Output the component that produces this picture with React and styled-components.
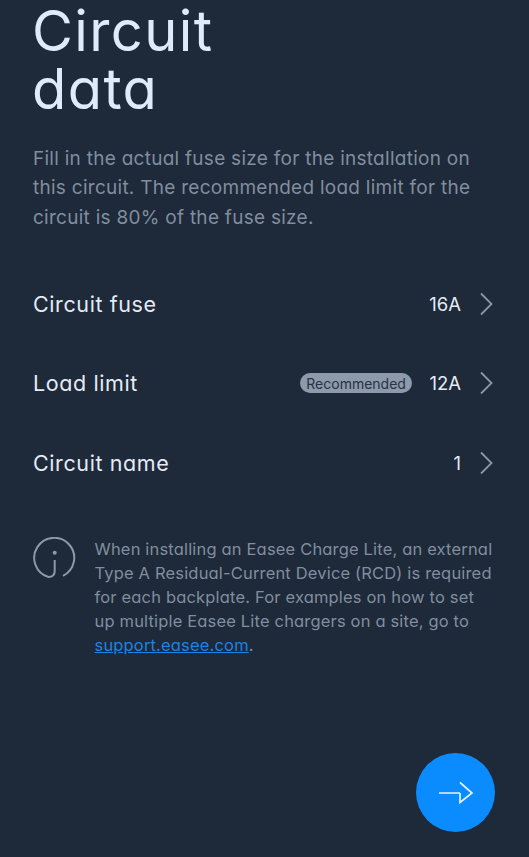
import React from "react";
import styled, { createGlobalStyle } from "styled-components";

const Global = createGlobalStyle`
  html, body { margin: 0; padding: 0; background: #1e2939; }
  body { font-family: Inter, "Noto Sans", sans-serif; font-feature-settings: "cv11" 1; }
`;
const Page = styled.div`
  box-sizing: border-box; width: 529px; height: 857px; overflow: hidden;
  display: flex; flex-direction: column; padding: 0 36px 0 33px; background: #1e2939;
`;
const Title = styled.h1`
  margin: 2px 0 0 -1px; font-size: 56px; line-height: 58px; font-weight: 400; color: #dfeafa; letter-spacing: 1.4px;
`;
const Lead = styled.p`
  margin: 26px 0 0; width: 450px; font-size: 19px; line-height: 29.4px; font-weight: 400; color: #808e9f; letter-spacing: 0.27px;
`;
const List = styled.div`
  margin-top: 32px; display: flex; flex-direction: column;
`;
const Row = styled.div`
  height: 79.5px; display: flex; align-items: center; gap: 18px; color: #e4ebf5;
`;
const Label = styled.span`
  flex: 1; font-size: 21.5px; font-weight: 400; letter-spacing: 0.6px;
`;
const Badge = styled.span`
  height: 20px; border-radius: 10px; padding: 0 6.5px; margin-right: -1px; display: flex; align-items: center;
  background: #8c9aac; color: #273243; font-size: 14px; letter-spacing: 0;
`;
const Value = styled.span`
  font-size: 18.5px; font-weight: 400; color: #e4ebf5;
`;
const Chevron = () => (
  <svg width="14" height="24" viewBox="0 0 14 24" fill="none" stroke="#8a97a8" strokeWidth="1.8">
    <path d="M2 1.5 L12.5 12 L2 22.5" />
  </svg>
);
const Note = styled.div`
  margin-top: 34px; display: flex; gap: 18.5px;
`;
const NoteText = styled.p`
  margin: 0; width: 400px; font-size: 16.5px; line-height: 24px; color: #808e9f; letter-spacing: 0.17px;
`;
const NoteIcon = styled.svg`
  flex: none; width: 43px; height: 43px;
`;
const Link = styled.a`
  color: #1a83e8; text-decoration: underline;
`;
const Fab = styled.button`
  position: absolute; left: 416px; top: 753px; width: 79px; height: 79px; border-radius: 50%;
  border: 0; padding: 0; background: #0a8cff; display: flex; align-items: center; justify-content: center;
`;
export default function App() {
  return (
    <Page>
      <Global />
      <Title>Circuit<br />data</Title>
      <Lead>Fill in the actual fuse size for the installation on this circuit. The recommended load limit for the circuit is 80% of the fuse size.</Lead>
      <List>
        <Row><Label>Circuit fuse</Label><Value>16A</Value><Chevron /></Row>
        <Row><Label>Load limit</Label><Badge>Recommended</Badge><Value>12A</Value><Chevron /></Row>
        <Row><Label>Circuit name</Label><Value>1</Value><Chevron /></Row>
      </List>
      <Note>
        <NoteIcon viewBox="0 0 43 43" fill="none" stroke="#8c99aa" strokeWidth="2">
          <path d="M30 38.8 A20 20 0 1 0 15.5 40 Q21.7 40 21.7 34 L21.7 23" />
          <circle cx="21.7" cy="15.7" r="2" fill="#8c99aa" stroke="none" />
        </NoteIcon>
        <NoteText>When installing an Easee Charge Lite, an external Type A Residual-Current Device (RCD) is required for each backplate. For examples on how to set up multiple Easee Lite chargers on a site, go to <Link>support.easee.com</Link>.</NoteText>
      </Note>
      <Fab aria-label="Next">
        <svg width="34" height="24" viewBox="0 0 34 24" fill="none" stroke="#e8f1fb" strokeWidth="1.7">
          <path d="M0 12 H21 M21 12 V21.5 L33 12 L21 1.5" />
        </svg>
      </Fab>
    </Page>
  );
}
